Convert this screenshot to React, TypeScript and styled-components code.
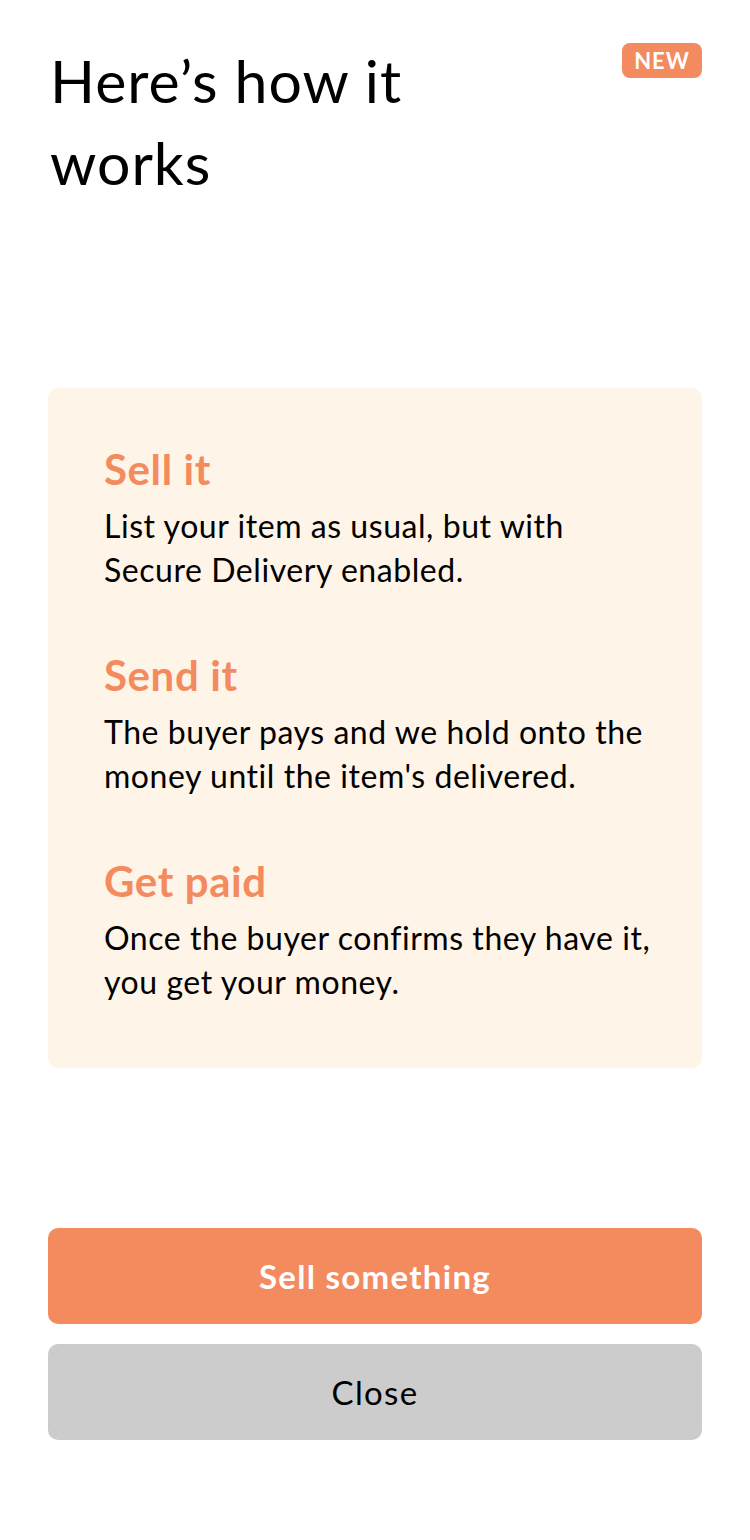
import React from "react";
import styled, { createGlobalStyle } from "styled-components";

const GlobalStyle = createGlobalStyle`
  html, body {
    margin: 0;
    padding: 0;
    background: #ffffff;
  }
  body {
    font-family: Lato, "Noto Sans", sans-serif;
    color: #000000;
    -webkit-font-smoothing: antialiased;
  }
  * { box-sizing: border-box; }
`;

const Page = styled.div`
  width: 750px;
  min-height: 1540px;
  padding: 40px 48px 0;
  display: flex;
  flex-direction: column;
`;

const Header = styled.header`
  display: flex;
  justify-content: space-between;
  align-items: flex-start;
`;

const Title = styled.h1`
  margin: 0 0 0 2px;
  width: 400px;
  font-size: 59px;
  line-height: 82px;
  font-weight: 400;
  letter-spacing: 1px;
  color: #000;
`;

const Badge = styled.span`
  margin-top: 3px;
  width: 80px;
  height: 35px;
  border-radius: 8px;
  background: #f38b5f;
  color: #fff;
  font-size: 22px;
  font-weight: 700;
  letter-spacing: 1px;
  display: flex;
  align-items: center;
  justify-content: center;
`;

const Card = styled.section`
  margin-top: 184px;
  background: #fef4e8;
  border-radius: 10px;
  padding: 56px 36px 64px 56px;
  display: flex;
  flex-direction: column;
  gap: 58px;
`;

const Step = styled.div`
  display: flex;
  flex-direction: column;
  gap: 10px;
`;

const StepTitle = styled.h2`
  margin: 0;
  font-size: 42px;
  line-height: 50px;
  font-weight: 700;
  letter-spacing: 0.6px;
  color: #f38b5f;
`;

const StepText = styled.p`
  margin: 0;
  font-size: 32px;
  line-height: 44px;
  font-weight: 400;
  letter-spacing: 0.55px;
  color: #000;
`;

const Actions = styled.div`
  margin-top: 160px;
  display: flex;
  flex-direction: column;
  gap: 20px;
`;

const Button = styled.button<{ $variant: "primary" | "secondary" }>`
  height: 96px;
  border: none;
  border-radius: 10px;
  font-family: inherit;
  font-size: 33px;
  letter-spacing: 1.3px;
  cursor: pointer;
  background: ${(p) => (p.$variant === "primary" ? "#f38b5f" : "#cccccc")};
  color: ${(p) => (p.$variant === "primary" ? "#ffffff" : "#000000")};
  font-weight: ${(p) => (p.$variant === "primary" ? 700 : 400)};
`;

const steps = [
  { title: "Sell it", text: "List your item as usual, but with Secure Delivery enabled." },
  { title: "Send it", text: "The buyer pays and we hold onto the money until the item's delivered." },
  { title: "Get paid", text: "Once the buyer confirms they have it, you get your money." },
];

export default function App() {
  return (
    <>
      <GlobalStyle />
      <Page>
        <Header>
          <Title>Here’s how it works</Title>
          <Badge>NEW</Badge>
        </Header>
        <Card>
          {steps.map((s) => (
            <Step key={s.title}>
              <StepTitle>{s.title}</StepTitle>
              <StepText>{s.text}</StepText>
            </Step>
          ))}
        </Card>
        <Actions>
          <Button $variant="primary">Sell something</Button>
          <Button $variant="secondary">Close</Button>
        </Actions>
      </Page>
    </>
  );
}
